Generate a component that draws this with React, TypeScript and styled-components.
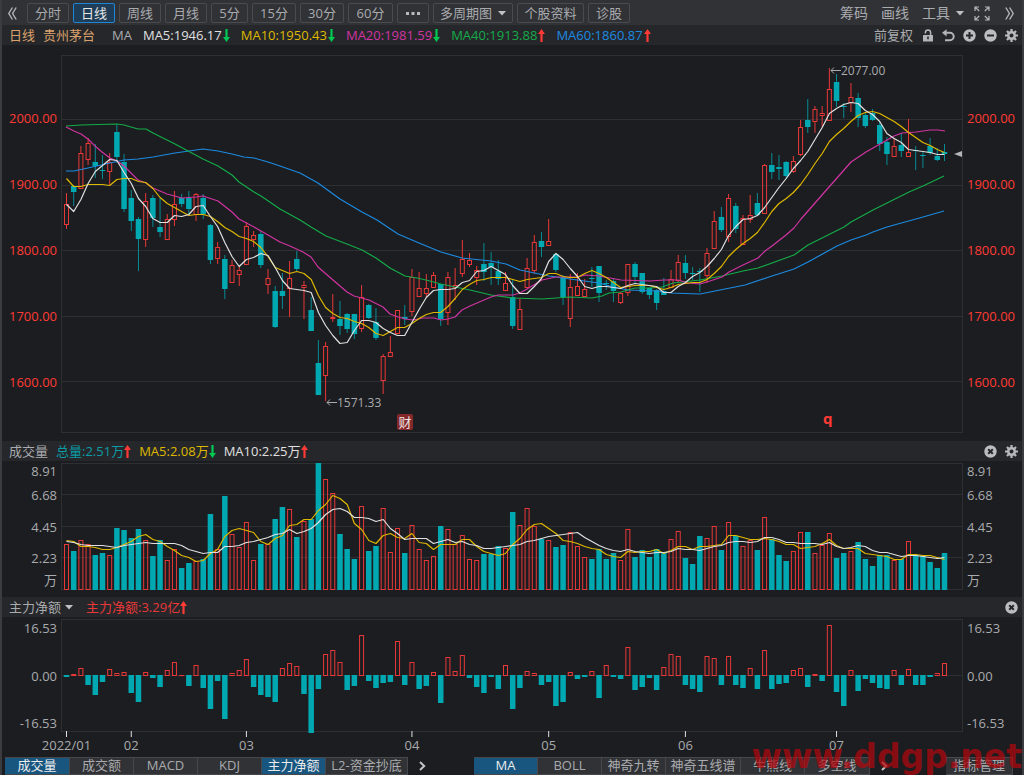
import React from 'react';
import styled, { createGlobalStyle } from 'styled-components';

const color = {
  page: '#1c1d20',
  bar: '#313236',
  strip: '#26272b',
  line: '#2e2f33',
  edge: '#3b3c40',
  text: '#a9abae',
  red: '#e83838',
  hot: '#ff3b35',
  cyan: '#00a8b2',
  green: '#14ab49',
  lime: '#00c853',
  yellow: '#dfb800',
  magenta: '#d034a2',
  blue: '#1c8ae0',
  white: '#e0e0e0',
  peach: '#dca26c',
};

const GlobalStyle = createGlobalStyle`
  * { box-sizing: border-box; }
  body {
    margin: 0;
    background: ${color.page};
    color: ${color.text};
    font: 13px/18px "Open Sans", "Noto Sans CJK SC", sans-serif;
  }
  button, select { font: inherit; color: inherit; }
`;

const Shell = styled.div`
  position: relative;
  overflow: hidden;
  border: solid ${color.edge};
  border-width: 0 2px;
`;

const Toolbar = styled.nav`
  display: flex;
  align-items: center;
  gap: 4px;
  height: 25px;
  padding: 1px 6px 0 2px;
  background: ${color.bar};
`;

const IconButton = styled.button<{ $width?: number }>`
  display: flex;
  align-items: center;
  justify-content: center;
  width: ${(p) => p.$width ?? 13}px;
  height: 18px;
  padding: 0;
  border: 0;
  background: none;
`;

const Collapse = styled(IconButton)`
  margin-right: 3px;
`;

const PeriodButton = styled.button<{ $width: number; $active?: boolean }>`
  display: flex;
  align-items: center;
  justify-content: center;
  gap: 6px;
  width: ${(p) => p.$width}px;
  height: 20px;
  padding: 0;
  white-space: nowrap;
  border: 1px solid ${(p) => (p.$active ? '#1f86d6' : '#4a4b4f')};
  border-radius: 2px;
  background: ${(p) => (p.$active ? '#1f3d57' : 'transparent')};
  color: ${(p) => (p.$active ? '#e6e6e6' : color.text)};
`;

const Tools = styled.div`
  display: flex;
  align-items: center;
  gap: 13px;
  margin-left: auto;
`;

const ToolButton = styled.button`
  display: flex;
  align-items: center;
  gap: 6px;
  padding: 0;
  border: 0;
  background: none;
  font-size: 14px;
  white-space: nowrap;
`;

const Screen = styled(IconButton)`
  margin: 0 0 0 -3px;
`;

const Legend = styled.header<{ $gap?: number }>`
  display: flex;
  align-items: center;
  gap: ${(p) => p.$gap ?? 11}px;
  height: 20px;
  padding: 0 4px 0 7px;
  background: ${color.strip};
  white-space: nowrap;
`;

const Entry = styled.span<{ $color?: string }>`
  display: flex;
  align-items: center;
  color: ${(p) => p.$color ?? color.text};
`;

const Average = styled(Entry)`
  gap: 1px;
`;

const Symbol = styled(Entry)`
  gap: 8px;
  margin-right: 6px;
`;

const Actions = styled.div`
  display: flex;
  align-items: center;
  gap: 8px;
  margin-left: auto;
`;

const Picker = styled.label`
  display: flex;
  align-items: center;
  gap: 3px;
  margin-right: 5px;
  select {
    appearance: none;
    border: 0;
    padding: 0;
    background: none;
  }
`;

const Panel = styled.section<{ $top: number; $bottom: number }>`
  display: grid;
  grid-template-columns: 59px minmax(0, 1fr) 59px;
  padding: ${(p) => p.$top}px 0 ${(p) => p.$bottom}px;
`;

const Plot = styled.div<{ $height: number }>`
  position: relative;
  height: ${(p) => p.$height}px;
  svg {
    display: block;
    width: 100%;
    height: 100%;
    overflow: visible;
  }
`;

const Axis = styled.div<{ $side: 'left' | 'right' }>`
  padding: 0 4px;
  text-align: ${(p) => (p.$side === 'left' ? 'right' : 'left')};
`;

const PriceAxis = styled(Axis)`
  padding-top: 30px;
  color: ${color.hot};
  line-height: 66px;
`;

const VolumeAxis = styled(Axis)`
  display: grid;
  grid-template-rows: 16px 32px 31px 31px 14px;
  align-items: center;
`;

const FlowAxis = styled(Axis)`
  display: flex;
  flex-direction: column;
  justify-content: space-between;
`;

const Note = styled.span`
  position: absolute;
  font-size: 12px;
`;

const Badge = styled.span`
  position: absolute;
  width: 16px;
  height: 16px;
  border-radius: 2px;
  background: #84282a;
  color: #f0e4e4;
  line-height: 16px;
  text-align: center;
`;

const Marker = styled.span`
  position: absolute;
  color: ${color.hot};
  font-size: 15px;
  font-weight: 700;
`;

const Months = styled.div`
  position: relative;
  height: 25px;
  margin: 0 59px;
`;

const Month = styled.span`
  position: absolute;
  top: 4px;
  transform: translateX(-50%);
`;

const Tabs = styled.footer`
  display: flex;
  align-items: flex-start;
  height: 18px;
  padding: 0 9px 0 3px;
`;

const Tab = styled.button<{ $active?: boolean; $width?: number }>`
  width: ${(p) => p.$width ?? 64}px;
  height: 18px;
  padding: 0 0 2px;
  border: solid #47484c;
  border-width: 1px 1px 1px 0;
  background: ${(p) => (p.$active ? '#185680' : color.bar)};
  color: ${(p) => (p.$active ? '#ececec' : color.text)};
  line-height: 14px;
  white-space: nowrap;
`;

const More = styled(IconButton)`
  margin: 0 11px;
`;

const TabGroup = styled.div`
  display: flex;
  margin-right: auto;
  &:first-child { margin-right: 37px; }
`;

const Watermark = styled.div`
  position: absolute;
  right: 0;
  bottom: -2px;
  color: rgba(178, 8, 14, 0.74);
  font: 700 33px/40px "DejaVu Sans", sans-serif;
  pointer-events: none;
`;

/* Candles: [high, body top, body bottom, low], rising when the last flag is 1. */
type Candle = [number, number, number, number, 0 | 1];
const candles: Candle[] = [
  [193, 204, 224, 229, 1], [185, 186, 192, 206, 0], [146, 153, 188, 188, 1], [138, 143, 159, 165, 1],
  [144, 162, 166, 178, 0], [155, 170, 171, 179, 0], [153, 162, 171, 185, 1], [125, 132, 157, 163, 0],
  [154, 162, 209, 212, 0], [190, 198, 221, 231, 0], [217, 219, 239, 271, 0], [193, 201, 239, 247, 1],
  [195, 198, 218, 227, 0], [198, 227, 232, 237, 0], [214, 219, 239, 239, 1], [191, 204, 219, 226, 1],
  [194, 198, 204, 207, 0], [191, 198, 209, 214, 0], [193, 194, 214, 221, 1], [194, 198, 214, 219, 0],
  [224, 225, 260, 264, 0], [242, 247, 258, 264, 1], [255, 259, 289, 299, 0], [260, 265, 282, 282, 1],
  [267, 270, 274, 286, 1], [222, 226, 264, 264, 1], [231, 235, 239, 247, 1], [231, 234, 265, 268, 0],
  [269, 278, 284, 294, 1], [286, 291, 327, 328, 0], [273, 291, 296, 309, 0], [261, 278, 288, 317, 1],
  [251, 259, 269, 271, 0], [281, 285, 287, 319, 1], [297, 310, 331, 331, 0], [340, 363, 395, 395, 0],
  [342, 346, 375, 401, 1], [294, 317, 318, 322, 1], [301, 319, 326, 335, 0], [313, 314, 329, 333, 0],
  [314, 314, 334, 339, 0], [285, 297, 328, 332, 1], [304, 305, 318, 319, 0], [308, 322, 338, 340, 0],
  [354, 356, 380, 394, 1], [336, 352, 356, 356, 1], [310, 310, 333, 333, 1], [305, 317, 319, 325, 0],
  [269, 277, 311, 316, 1], [272, 288, 296, 296, 1], [274, 288, 293, 297, 1], [272, 275, 287, 287, 1],
  [284, 284, 319, 326, 0], [272, 277, 312, 325, 1], [268, 285, 287, 300, 1], [240, 259, 273, 277, 1],
  [253, 260, 264, 267, 1], [266, 270, 277, 285, 1], [243, 264, 272, 281, 0], [252, 263, 267, 285, 0],
  [260, 271, 279, 285, 0], [272, 283, 290, 290, 1], [279, 297, 326, 329, 0], [299, 309, 329, 330, 1],
  [258, 268, 287, 287, 1], [235, 242, 270, 274, 1], [232, 241, 247, 257, 0], [219, 241, 245, 245, 1],
  [253, 254, 270, 272, 0], [275, 277, 297, 305, 0], [274, 287, 318, 327, 1], [273, 286, 295, 296, 1],
  [279, 289, 296, 297, 1], [267, 278, 279, 287, 0], [266, 266, 293, 302, 0], [280, 283, 284, 290, 0],
  [278, 281, 291, 302, 0], [292, 293, 302, 304, 1], [264, 264, 292, 296, 1], [262, 264, 277, 283, 0],
  [273, 273, 292, 294, 0], [287, 288, 295, 299, 0], [289, 290, 303, 310, 0], [278, 291, 295, 295, 0],
  [270, 279, 287, 288, 1], [255, 262, 280, 282, 1], [255, 263, 273, 279, 0], [267, 273, 274, 280, 0],
  [268, 271, 272, 292, 0], [248, 253, 275, 283, 1], [211, 221, 248, 248, 1], [207, 217, 230, 232, 0],
  [194, 198, 236, 242, 1], [203, 206, 229, 233, 0], [215, 218, 244, 244, 1], [195, 215, 219, 223, 1],
  [193, 203, 215, 215, 0], [164, 165, 213, 213, 1], [153, 165, 172, 179, 0], [155, 167, 169, 180, 0],
  [161, 162, 176, 178, 0], [156, 161, 171, 173, 1], [120, 127, 154, 156, 1], [99, 120, 127, 133, 0],
  [106, 109, 121, 133, 1], [106, 113, 115, 127, 1], [68, 89, 120, 120, 1], [74, 82, 101, 107, 0],
  [103, 106, 107, 118, 0], [83, 97, 102, 112, 1], [93, 98, 118, 127, 0], [112, 115, 126, 128, 0],
  [109, 113, 120, 121, 0], [122, 125, 144, 151, 0], [137, 142, 154, 165, 0], [138, 146, 156, 156, 1],
  [133, 145, 151, 157, 0], [119, 152, 156, 156, 1], [146, 150, 151, 170, 0], [151, 155, 156, 168, 0],
  [138, 146, 153, 155, 0], [148, 156, 160, 161, 0], [144, 152, 154, 161, 0],
];

const ma5 = [
  204, 211, 199, 183, 171, 165, 159, 160, 172, 183, 198, 206, 218, 222, 222, 215, 216, 214, 206, 205,
  216, 226, 242, 256, 266, 259, 257, 253, 255, 267, 280, 288, 289, 290, 292, 312, 325, 335, 343, 342,
  330, 320, 320, 322, 328, 332, 335, 335, 322, 309, 297, 290, 289, 289, 288, 282, 280, 271, 270, 266,
  270, 274, 285, 293, 293, 286, 278, 261, 253, 259, 268, 276, 286, 288, 286, 286, 287, 288, 285, 283,
  284, 285, 286, 292, 292, 286, 282, 276, 272, 266, 258, 249, 235, 226, 219, 218, 215, 207, 197, 187,
  178, 168, 160, 151, 139, 127, 113, 108, 104, 102, 103, 110, 114, 121, 133, 138, 142, 149, 150, 151,
  152, 154, 154,
];

const ma10 = [
  178, 186, 186, 184, 184, 184, 185, 179, 178, 178, 181, 182, 188, 197, 203, 207, 211, 215, 214, 214,
  216, 221, 227, 231, 236, 238, 241, 247, 256, 267, 270, 273, 271, 273, 279, 295, 307, 313, 317, 318,
  321, 323, 327, 333, 335, 331, 327, 327, 323, 318, 314, 312, 312, 306, 298, 289, 284, 280, 279, 277,
  277, 277, 279, 281, 279, 278, 277, 273, 273, 276, 277, 277, 273, 270, 273, 277, 282, 287, 286, 285,
  285, 285, 287, 289, 287, 284, 283, 282, 282, 279, 273, 266, 256, 249, 243, 238, 232, 222, 211, 203,
  198, 192, 184, 174, 163, 153, 141, 134, 128, 121, 115, 112, 111, 113, 117, 121, 126, 132, 137, 142,
  145, 149, 152,
];

const ma20 =
  '66,127 74,131 81,134 88,139 95,146 102,152 110,158 117,161 124,166 138,180 146,183 153,188 167,194 182,198 196,197 203,196 218,201 232,212 239,219 254,227 268,235 280,242 290,246 303,252 311,257 318,267 333,280 347,292 354,296 369,300 383,307 390,314 398,317 405,319 413,320 423,318 434,318 441,320 448,319 455,317 462,310 470,306 491,297 498,295 513,295 520,293 527,289 542,280 556,277 578,277 585,275 599,276 621,280 650,281 664,280 678,280 688,283 700,284 710,281 722,277 729,272 743,265 758,258 765,251 772,246 786,235 794,228 801,219 815,203 822,195 837,178 851,162 866,152 880,144 894,136 902,133 916,132 930,130 938,130 945,131';
const ma40 =
  '66,126 81,125 117,124 124,125 138,129 146,129 153,133 175,144 203,159 218,166 232,175 239,182 254,192 261,196 280,209 300,220 311,227 326,236 347,244 362,250 376,258 390,268 405,276 417,278 426,280 441,284 455,287 470,290 491,295 513,298 542,299 570,297 592,298 602,296 609,293 621,292 635,288 650,288 662,287 673,283 700,280 722,276 743,271 758,268 794,255 808,245 822,238 844,227 851,222 873,210 909,192 923,186 944,176';
const ma60 =
  '66,171 74,171 88,168 110,163 124,160 138,159 153,157 175,153 203,149 218,151 232,154 244,157 254,158 268,162 280,166 300,173 318,183 340,199 362,212 377,220 398,234 419,243 441,252 462,258 491,261 506,264 520,270 549,276 570,279 599,283 613,287 628,290 657,291 671,293 700,294 710,292 745,285 772,276 794,269 808,262 837,246 851,240 866,235 873,232 887,227 923,217 944,211';

const volumes = [
  544, 551, 540, 544, 555, 553, 555, 528, 530, 538, 529, 540, 556, 540, 560, 549, 568, 563, 561, 559,
  514, 549, 496, 534, 547, 522, 560, 544, 544, 519, 507, 509, 537, 521, 519, 463, 479, 493, 534, 549,
  559, 506, 551, 546, 508, 552, 528, 553, 525, 549, 560, 556, 526, 529, 544, 535, 559, 560, 554, 554,
  546, 548, 512, 525, 508, 526, 539, 540, 547, 545, 532, 546, 557, 559, 549, 559, 553, 560, 529, 557,
  550, 557, 549, 552, 539, 531, 558, 564, 536, 538, 526, 550, 522, 536, 546, 540, 550, 517, 539, 555,
  561, 551, 532, 532, 553, 545, 533, 558, 553, 551, 542, 559, 566, 555, 555, 560, 559, 541, 555, 556,
  562, 568, 553,
];

const volumeMa5 = [
  540, 541, 546, 546, 547, 549, 549, 547, 544, 541, 536, 534, 539, 541, 546, 550, 555, 557, 561, 560,
  553, 549, 536, 530, 528, 530, 532, 541, 544, 538, 535, 525, 524, 519, 519, 510, 504, 495, 498, 504,
  523, 529, 540, 543, 535, 533, 537, 538, 533, 542, 543, 549, 544, 544, 544, 539, 539, 546, 551, 553,
  555, 553, 544, 538, 529, 524, 523, 528, 533, 540, 541, 543, 546, 548, 549, 554, 556, 557, 551, 552,
  551, 551, 549, 553, 550, 546, 546, 549, 546, 546, 545, 544, 535, 535, 537, 539, 539, 538, 539, 541,
  544, 544, 548, 547, 546, 543, 539, 545, 548, 548, 548, 553, 554, 555, 556, 559, 559, 554, 554, 555,
  555, 557, 559,
];

const volumeMa10 = [
  541, 542, 544, 545, 545, 545, 546, 547, 545, 544, 543, 542, 543, 543, 543, 543, 545, 549, 551, 553,
  552, 552, 546, 546, 545, 542, 541, 539, 537, 534, 533, 529, 533, 531, 528, 522, 514, 509, 508, 511,
  517, 517, 518, 521, 519, 528, 533, 539, 538, 538, 538, 543, 541, 539, 542, 541, 544, 545, 548, 548,
  547, 546, 545, 544, 541, 540, 538, 536, 535, 534, 533, 532, 537, 541, 545, 548, 550, 551, 549, 551,
  552, 553, 552, 552, 551, 548, 549, 549, 550, 548, 546, 545, 542, 541, 541, 542, 541, 537, 537, 539,
  542, 542, 543, 543, 543, 544, 542, 546, 548, 547, 545, 546, 550, 552, 552, 554, 556, 555, 555, 556,
  557, 558, 557,
];

const flows = [
  -1, 1, 7, -9, -19, -6, 6, 2, 3, -17, -26, 3, -2, -11, 5, 13, 0, -10, 10, -12,
  -33, -5, -43, 2, 5, 16, -11, -19, -21, -26, 7, 12, 9, -18, -57, -13, 21, 25, 13, -14,
  -10, 40, -5, -12, -7, -6, 34, -9, 13, -13, -10, 3, -27, 18, 4, 20, -2, -11, -17, -1,
  -13, 10, -33, -12, 4, 2, -9, -6, -30, -26, 3, -3, -1, 4, -22, 10, -1, -3, 28, -14,
  -11, -2, -14, 8, 21, 19, -9, -13, -16, 19, 17, -9, 19, -9, -12, 7, -13, 25, -13, -8,
  -7, 5, 7, -11, 1, -5, 50, -16, -30, 5, -15, -3, -7, -12, -13, 5, -9, 6, -9, -9,
  -1, 2, 12,
];

const LEFT = 61;
const WIDTH = 902;
const barX = (i: number) => 66.5 + (i * 878) / 122;
const series = (ys: number[]) => ys.map((y, i) => `${barX(i).toFixed(1)},${y + 0.5}`).join(' ');
const percent = (x: number) => `${((x - LEFT) / WIDTH) * 100}%`;

const Frame = ({ top, bottom, lines }: { top: number; bottom: number; lines: number[] }) => (
  <g fill="none" stroke={color.line} strokeWidth="1">
    <rect x={LEFT + 0.5} y={top + 0.5} width={WIDTH - 1} height={bottom - top - 1} />
    {lines.map((y) => (
      <line key={y} x1={LEFT} x2={LEFT + WIDTH} y1={y + 0.5} y2={y + 0.5} />
    ))}
  </g>
);

const Bar = ({ x, top, bottom, up }: { x: number; top: number; bottom: number; up: boolean }) =>
  up ? (
    <rect x={x - 2} y={top + 0.5} width="4" height={Math.max(bottom - top - 1, 0.1)} fill="none" stroke={color.red} />
  ) : (
    <rect x={x - 2.75} y={top} width="5.5" height={Math.max(bottom - top, 1)} fill={color.cyan} />
  );

const Arrow = ({ up }: { up?: boolean }) => (
  <svg width="7" height="13" viewBox="0 0 7 13" aria-hidden="true">
    {up ? (
      <path d="M3.5 0 7 5H4.6v8H2.4V5H0z" fill={color.hot} />
    ) : (
      <path d="M3.5 13 7 8H4.6V0H2.4v8H0z" fill={color.lime} />
    )}
  </svg>
);

const Caret = () => (
  <svg width="8" height="5" viewBox="0 0 8 5" aria-hidden="true">
    <path d="M0 0h8L4 4.6z" fill="#c0c1c4" />
  </svg>
);

const Chevrons = ({ right }: { right?: boolean }) => (
  <svg width="9" height="13" viewBox="0 0 9 13" fill="none" stroke="#b4b5b8" strokeWidth="1.4">
    <path d={right ? 'M.8.5l3.6 6-3.6 6M4.6.5l3.6 6-3.6 6' : 'M4.4.5.8 6.5l3.6 6M8.2.5l-3.6 6 3.6 6'} />
  </svg>
);

const Chevron = () => (
  <svg width="7" height="10" viewBox="0 0 7 10" fill="none" stroke="#c4c5c8" strokeWidth="2">
    <path d="M1 1l4.2 4L1 9" />
  </svg>
);

const Expand = () => (
  <svg width="16" height="15" viewBox="0 0 16 15" fill="none" stroke="#b4b5b8" strokeWidth="1.2">
    <path d="M1 5V1h4M11 1h4v4M15 10v4h-4M5 14H1v-4M1 1l4.2 4M15 1l-4.2 4M15 14l-4.2-4M1 14l4.2-4" />
  </svg>
);

const Lock = () => (
  <svg width="12" height="13" viewBox="0 0 12 13">
    <path d="M3.4 4.4V3.6a2.6 2.6 0 0 1 5.2 0V6" fill="none" stroke="#b4b5b8" strokeWidth="1.5" />
    <rect x="1" y="6" width="10" height="6.5" rx=".5" fill="#b4b5b8" />
    <path d="M6 7.6v2.6" stroke={color.strip} strokeWidth="1.6" />
  </svg>
);

const Undo = () => (
  <svg width="13" height="13" viewBox="0 0 13 13">
    <path d="M3 3.8h5a3.7 3.7 0 0 1 0 7.4H3" fill="none" stroke="#b4b5b8" strokeWidth="2" />
    <path d="M0 3.8 4.6.2v7.2z" fill="#b4b5b8" />
  </svg>
);

const Disc = ({ d }: { d: string }) => (
  <svg width="13" height="13" viewBox="0 0 13 13">
    <circle cx="6.5" cy="6.5" r="6.2" fill="#bcbdc0" />
    <path d={d} stroke={color.strip} strokeWidth="2" />
  </svg>
);

const Gear = () => (
  <svg width="13" height="13" viewBox="0 0 14 14">
    <path d="M7 0v14M0 7h14M2.1 2.1l9.8 9.8M11.9 2.1l-9.8 9.8" stroke="#b8b9bc" strokeWidth="2.4" />
    <circle cx="7" cy="7" r="4.9" fill="#b8b9bc" />
    <circle cx="7" cy="7" r="2.1" fill={color.strip} />
  </svg>
);

const CROSS = 'M4.2 4.2l4.6 4.6M8.8 4.2 4.2 8.8';

const periods: [string, number][] = [
  ['分时', 42], ['日线', 42], ['周线', 42], ['月线', 42], ['5分', 37], ['15分', 44], ['30分', 44], ['60分', 45],
];

const averages: [string, string, boolean][] = [
  ['MA5:1946.17', color.white, false],
  ['MA10:1950.43', color.yellow, false],
  ['MA20:1981.59', color.magenta, false],
  ['MA40:1913.88', color.green, true],
  ['MA60:1860.87', color.blue, true],
];

const months: [string, number][] = [
  ['2022/01', 0], ['02', 9], ['03', 25], ['04', 48], ['05', 67], ['06', 86], ['07', 107],
];

const sides = ['left', 'right'] as const;

const withAxes = (Side: typeof Axis, labels: string[], plot: React.ReactNode) => {
  const [left, right] = sides.map((side) => (
    <Side key={side} $side={side}>
      {labels.map((label) => (
        <div key={label}>{label}</div>
      ))}
    </Side>
  ));
  return (
    <>
      {left}
      {plot}
      {right}
    </>
  );
};

const PricePlot = () => (
  <Plot $height={378}>
    <svg viewBox="61 55 902 378" preserveAspectRatio="none" role="img" aria-label="日线 贵州茅台">
      <Frame top={55} bottom={433} lines={[119, 185, 250, 316, 381]} />
      {candles.map(([high, top, bottom, low, up], i) => {
        const x = barX(i);
        return (
          <g key={i}>
            <path
              d={up ? `M${x} ${high}V${top}M${x} ${bottom}V${low}` : `M${x} ${high}V${low}`}
              stroke={up ? color.red : color.cyan}
              strokeOpacity={up ? 1 : 0.8}
            />
            <Bar x={x} top={top} bottom={bottom + (up ? 1 : 0)} up={up === 1} />
          </g>
        );
      })}
      <g fill="none" strokeWidth="1.2" strokeLinejoin="round">
        <polyline points={ma60} stroke={color.blue} />
        <polyline points={ma40} stroke={color.green} />
        <polyline points={ma20} stroke={color.magenta} />
        <polyline points={series(ma10)} stroke={color.yellow} />
        <polyline points={series(ma5)} stroke={color.white} />
      </g>
      <path d="M841 70.5H831M834 67.5l-3 3 3 3M337 402.5H327M330 399.5l-3 3 3 3" fill="none" stroke={color.text} />
      <path d="M954 154l8-3v6z" fill="#b4b5b8" />
    </svg>
    <Note style={{ left: percent(841), top: 7 }}>2077.00</Note>
    <Note style={{ left: percent(337), top: 339 }}>1571.33</Note>
    <Badge style={{ left: percent(397), top: 359 }}>财</Badge>
    <Marker style={{ left: percent(823), top: 354 }}>q</Marker>
  </Plot>
);

const VolumePlot = () => (
  <Plot $height={127}>
    <svg viewBox="61 463 902 127" preserveAspectRatio="none" role="img" aria-label="成交量">
      <Frame top={463} bottom={590} lines={[494, 526, 557]} />
      {volumes.map((top, i) => (
        <Bar key={i} x={barX(i)} top={top} bottom={590} up={candles[i][4] === 1} />
      ))}
      <g fill="none" strokeWidth="1.2" strokeLinejoin="round">
        <polyline points={series(volumeMa5)} stroke={color.yellow} />
        <polyline points={series(volumeMa10)} stroke={color.white} />
      </g>
    </svg>
  </Plot>
);

const FlowPlot = () => (
  <Plot $height={113}>
    <svg viewBox="61 619 902 113" preserveAspectRatio="none" role="img" aria-label="主力净额">
      <Frame top={619} bottom={732} lines={[675]} />
      {flows.map((v, i) =>
        v >= 0 ? (
          <Bar key={i} x={barX(i)} top={675 - v} bottom={676} up />
        ) : (
          <Bar key={i} x={barX(i)} top={675} bottom={676 - v} up={false} />
        ),
      )}
      {months.map(([label, i]) => (
        <line key={label} x1={barX(i)} x2={barX(i)} y1="731" y2="737" stroke={color.white} />
      ))}
    </svg>
  </Plot>
);

export default function App() {
  return (
    <Shell>
      <GlobalStyle />
      <Toolbar>
        <Collapse $width={16} aria-label="向左"><Chevrons /></Collapse>
        {periods.map(([label, width]) => (
          <PeriodButton key={label} $width={width} $active={label === '日线'}>{label}</PeriodButton>
        ))}
        <PeriodButton $width={32} aria-label="更多周期">
          <svg width="14" height="3" viewBox="0 0 14 3" fill="#b8b9bc">
            <path d="M0 0h3v3H0zM5.5 0h3v3h-3zM11 0h3v3h-3z" />
          </svg>
        </PeriodButton>
        <PeriodButton $width={80} aria-haspopup="menu">多周期图<Caret /></PeriodButton>
        <PeriodButton $width={67}>个股资料</PeriodButton>
        <PeriodButton $width={42}>诊股</PeriodButton>
        <Tools>
          <ToolButton>筹码</ToolButton>
          <ToolButton>画线</ToolButton>
          <ToolButton aria-haspopup="menu">工具<Caret /></ToolButton>
          <Screen $width={16} aria-label="全屏"><Expand /></Screen>
          <IconButton $width={13} aria-label="向右"><Chevrons right /></IconButton>
        </Tools>
      </Toolbar>

      <Legend>
        <Symbol $color={color.peach}><span>日线</span><span>贵州茅台</span></Symbol>
        <Entry>MA</Entry>
        {averages.map(([label, tint, up]) => (
          <Average key={label} $color={tint}>{label}<Arrow up={up} /></Average>
        ))}
        <Actions>
          <span>前复权</span>
          <IconButton aria-label="锁定"><Lock /></IconButton>
          <IconButton aria-label="撤销"><Undo /></IconButton>
          <IconButton aria-label="放大"><Disc d="M6.5 3v7M3 6.5h7" /></IconButton>
          <IconButton aria-label="缩小"><Disc d="M3 6.5h7" /></IconButton>
          <IconButton aria-label="设置"><Gear /></IconButton>
        </Actions>
      </Legend>
      <Panel $top={10} $bottom={8}>
        {withAxes(PriceAxis, ['2000.00', '1900.00', '1800.00', '1700.00', '1600.00'], <PricePlot />)}
      </Panel>

      <Legend $gap={8}>
        <Entry>成交量</Entry>
        <Entry $color="#0b9ca5">总量:2.51万<Arrow up /></Entry>
        <Entry $color={color.yellow}>MA5:2.08万<Arrow /></Entry>
        <Entry $color={color.white}>MA10:2.25万<Arrow up /></Entry>
        <Actions>
          <IconButton aria-label="关闭成交量"><Disc d={CROSS} /></IconButton>
          <IconButton aria-label="成交量设置"><Gear /></IconButton>
        </Actions>
      </Legend>
      <Panel $top={2} $bottom={7}>
        {withAxes(VolumeAxis, ['8.91', '6.68', '4.45', '2.23', '万'], <VolumePlot />)}
      </Panel>

      <Legend $gap={8}>
        <Picker>
          <select aria-label="指标" defaultValue="主力净额"><option>主力净额</option></select>
          <Caret />
        </Picker>
        <Entry $color={color.red}>主力净额:3.29亿<Arrow up /></Entry>
        <Actions>
          <IconButton aria-label="关闭主力净额"><Disc d={CROSS} /></IconButton>
        </Actions>
      </Legend>
      <Panel $top={2} $bottom={0}>
        {withAxes(FlowAxis, ['16.53', '0.00', '-16.53'], <FlowPlot />)}
      </Panel>
      <Months>
        {months.map(([label, i]) => (
          <Month key={label} style={{ left: percent(barX(i)) }}>{label}</Month>
        ))}
      </Months>

      <Tabs>
        <TabGroup>
          <Tab $width={65} $active>成交量</Tab>
          <Tab>成交额</Tab>
          <Tab>MACD</Tab>
          <Tab>KDJ</Tab>
          <Tab $active>主力净额</Tab>
          <Tab $width={82}>L2-资金抄底</Tab>
          <More $width={7} aria-label="更多指标"><Chevron /></More>
        </TabGroup>
        <TabGroup>
          <Tab $active>MA</Tab>
          <Tab>BOLL</Tab>
          <Tab>神奇九转</Tab>
          <Tab $width={75}>神奇五线谱</Tab>
          <Tab>牛熊线</Tab>
          <Tab $width={65}>多空线</Tab>
          <More $width={7} aria-label="更多主图指标"><Chevron /></More>
        </TabGroup>
        <Tab $width={67}>指标管理</Tab>
      </Tabs>
      <Watermark>www.ddgp.net</Watermark>
    </Shell>
  );
}
